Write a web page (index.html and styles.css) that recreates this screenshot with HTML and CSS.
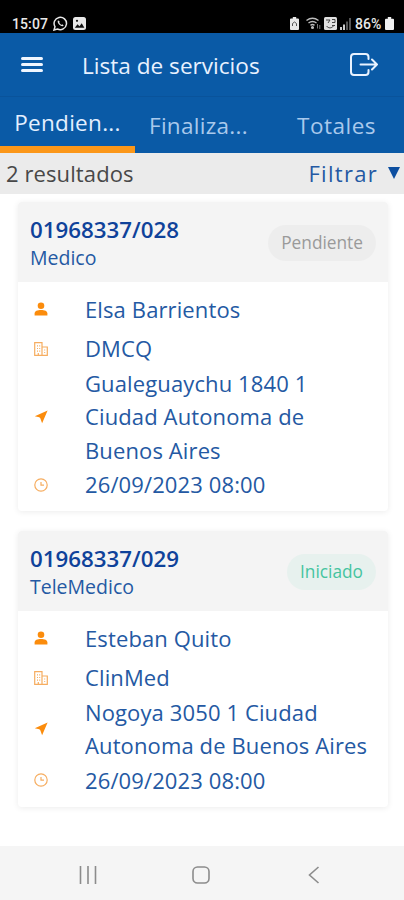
FILE: index.html
```html
<!DOCTYPE html>
<html lang="es">
<head>
    <meta charset="UTF-8">
    <meta name="viewport" content="width=device-width, initial-scale=1.0">
    <title>Lista de servicios</title>
    <link rel="stylesheet" href="styles.css">
</head>
<body>
    <!-- shared icons -->
    <svg class="sprite">
        <symbol id="person" viewBox="0 0 14 14">
            <circle cx="7" cy="3.700" r="3.300"/>
            <path d="M.6 13.400V11.600C.6 9 3.400 8 7 8s6.400 1 6.400 3.600v1.800z"/>
        </symbol>
        <symbol id="building" viewBox="0 0 14 14">
            <path d="M.7 13.300V.7H8v12.600zM8 5h5.300v8.300H8M3 3.800h1M5.200 3.800h1M3 6.500h1M5.200 6.500h1M3 9.200h1M5.200 9.200h1M4.300 13v-2M10.200 8h1M10.200 10.500h1"/>
        </symbol>
        <symbol id="arrow" viewBox="0 0 14 14">
            <path d="M13.600.6L8.100 13.200 6.300 8.200 5.300 7.200.8 6.300z"/>
        </symbol>
        <symbol id="clock" viewBox="0 0 14 14">
            <circle cx="7" cy="7" r="6.200"/>
            <path d="M7 4v3.200h3"/>
        </symbol>
    </svg>

    <div class="status-bar">
        <span class="time">15:07</span>
        <svg width="15" height="15" viewBox="0 0 15 15" fill="none" stroke="#e8e8e8" stroke-width="1.500">
            <path d="M1 14l1-3.300A6.200 6.200 0 1 1 4.500 13z"/>
            <path d="M5 4.300c-.9 1.500 0 3.200 1.400 4.500s3.300 2 4.300.8L9.200 8.300l-1 .6L6.200 6.700l.6-.9z" fill="#e8e8e8" stroke="none"/>
        </svg>
        <svg class="picture" width="13" height="13" viewBox="0 0 13 13">
            <rect width="13" height="13" rx="2.500" fill="#e8e8e8"/>
            <path d="M1.800 10.800l2.700-3.600 2 2 2.200-3 2.700 4.600z" fill="#111"/>
            <circle cx="4" cy="3.800" r="1.100" fill="#111"/>
        </svg>
        <div class="status-right">
            <svg width="9" height="13" viewBox="0 0 9 13">
                <path d="M2.800 0h3.400v1.500H8q1 0 1 1V12q0 1-1 1H1q-1 0-1-1V2.500q0-1 1-1h1.800z" fill="#e8e8e8"/>
                <path d="M2.500 9V6.500L4.500 5l2 1.500V9" fill="none" stroke="#555"/>
            </svg>
            <svg class="wifi" width="15" height="13" viewBox="0 0 15 13" fill="none" stroke="#bbb" stroke-width="1.500">
                <path d="M.5 3.500q6-4.500 12 0M2.500 6q4-3 8 0M4.500 8.300q2-1.500 4 0"/>
                <circle cx="6.500" cy="10.500" r=".8"/>
                <path d="M11.500 7v4.500M13.800 12V8" stroke="#777" stroke-width="1"/>
            </svg>
            <svg class="volte" width="13" height="13" viewBox="0 0 13 13">
                <rect width="13" height="13" rx="1.500" fill="#e0e0e0"/>
                <path d="M2 3h4l-2 3M8 2.500h3v3H8M2.500 9c2 2.500 5 2.500 7 0M8 8.500h3" fill="none" stroke="#444"/>
            </svg>
            <svg class="signal" width="11" height="12" viewBox="0 0 11 12">
                <path d="M0 9h2v3H0zM3 6.500h2V12H3z" fill="#ccc"/>
                <path d="M6 3.500h2V12H6zM9 0h2v12H9z" fill="#555"/>
            </svg>
            <span class="percent">86%</span>
            <svg width="9" height="13" viewBox="0 0 9 13">
                <path d="M2.800 0h3.400v1.800H8q1 0 1 1V12q0 1-1 1H1q-1 0-1-1V2.800q0-1 1-1h1.800z" fill="#f0f0f0"/>
            </svg>
        </div>
    </div>

    <header class="header">
        <div class="menu">
            <span></span>
            <span></span>
            <span></span>
        </div>
        <h1>Lista de servicios</h1>
        <svg class="logout" width="28" height="23" viewBox="0 0 28 23" fill="none" stroke="#e8f2ff" stroke-width="2" stroke-linecap="round" stroke-linejoin="round">
            <path d="M18.500 6V4q0-3-3-3H4Q1 1 1 4v15q0 3 3 3h11.500q3 0 3-3v-2M10.500 11.500H27M22 6.500l5 5-5 5"/>
        </svg>
    </header>

    <nav class="tabs">
        <div class="tab active">Pendien...</div>
        <div class="tab">Finaliza...</div>
        <div class="tab">Totales</div>
    </nav>

    <div class="filter-bar">
        <span class="results">2 resultados</span>
        <span class="filter">Filtrar</span>
        <span class="caret"></span>
    </div>

    <main class="list">
        <div class="card">
            <div class="card-header">
                <div>
                    <h2>01968337/028</h2>
                    <p>Medico</p>
                </div>
                <span class="badge">Pendiente</span>
            </div>
            <div class="card-body">
                <div class="row name"><svg class="icon"><use href="#person"/></svg><span>Elsa Barrientos</span></div>
                <div class="row"><svg class="icon line"><use href="#building"/></svg><span>DMCQ</span></div>
                <div class="row address"><svg class="icon"><use href="#arrow"/></svg><span>Gualeguaychu 1840 1 Ciudad Autonoma de Buenos Aires</span></div>
                <div class="row date"><svg class="icon line"><use href="#clock"/></svg><span>26/09/2023 08:00</span></div>
            </div>
        </div>

        <div class="card">
            <div class="card-header">
                <div>
                    <h2>01968337/029</h2>
                    <p>TeleMedico</p>
                </div>
                <span class="badge started">Iniciado</span>
            </div>
            <div class="card-body">
                <div class="row name"><svg class="icon"><use href="#person"/></svg><span>Esteban Quito</span></div>
                <div class="row"><svg class="icon line"><use href="#building"/></svg><span>ClinMed</span></div>
                <div class="row address"><svg class="icon"><use href="#arrow"/></svg><span>Nogoya 3050 1 Ciudad Autonoma de Buenos Aires</span></div>
                <div class="row date"><svg class="icon line"><use href="#clock"/></svg><span>26/09/2023 08:00</span></div>
            </div>
        </div>
    </main>

    <footer class="nav-bar">
        <svg width="18" height="18" viewBox="0 0 18 18"><path d="M1.500 0v18M9 0v18M16.500 0v18"/></svg>
        <svg width="18" height="18" viewBox="0 0 18 18"><rect x="1" y="1" width="16" height="16" rx="4.500"/></svg>
        <svg width="18" height="18" viewBox="0 0 18 18"><path d="M13.500 1L4.500 9l9 8"/></svg>
    </footer>
</body>
</html>
```

FILE: styles.css
```css
* {
    box-sizing: border-box;
}
body {
    margin: 0;
    height: 900px;
    display: flex;
    flex-direction: column;
    overflow: hidden;
    background: #fff;
    color: #2459a3;
    font-family: 'Open Sans', 'Noto Sans', sans-serif;
}
h1, h2, p {
    margin: 0;
}
.sprite {
    display: none;
}

/* phone status bar */
.status-bar {
    flex: none;
    height: 33px;
    padding: 14px 10px 0 12px;
    display: flex;
    align-items: center;
    background: #000;
    color: #e8e8e8;
    font-family: Roboto, sans-serif;
    font-size: 14px;
    font-weight: 500;
}
.time {
    width: 41px;
    letter-spacing: 0.1px;
}
.picture {
    margin-left: 5px;
}
.status-right {
    margin-left: auto;
    display: flex;
    align-items: center;
}
.wifi {
    margin-left: 7px;
}
.volte {
    margin-left: 3px;
}
.signal {
    margin-left: 3px;
}
.percent {
    width: 30px;
    margin-left: 4px;
    font-size: 14px;
}

.header {
    flex: none;
    height: 64px;
    padding: 0 26px 0 21px;
    display: flex;
    align-items: center;
    background: #0a5aa6;
    border-bottom: 1px solid #09539b;
}
.menu {
    width: 22px;
    display: flex;
    flex-direction: column;
    gap: 3px;
}
.menu span {
    height: 3px;
    border-radius: 2px;
    background: #f0f6ff;
}
.header h1 {
    margin-left: 39px;
    padding-top: 1px;
    color: #e8f1ff;
    font-size: 22.600px;
    font-weight: 500;
}
.logout {
    margin-left: auto;
}

.tabs {
    flex: none;
    height: 56px;
    display: flex;
    background: #0a5aa6;
}
.tab {
    flex: none;
    width: 127px;
    padding-top: 1px;
    color: #a9c9ec;
    font-size: 22.500px;
    line-height: 56px;
    text-align: center;
    letter-spacing: 0.3px;
}
.tab.active {
    width: 135px;
    padding-top: 0;
    color: #e3efff;
    line-height: 52px;
    border-bottom: 7px solid #fb9719;
}
.tab:last-child {
    width: 149px;
    letter-spacing: 0.5px;
}

.filter-bar {
    flex: none;
    height: 41px;
    padding: 0 4px 1px 6px;
    display: flex;
    align-items: center;
    background: #ebebeb;
    font-size: 22px;
}
.results {
    color: #484848;
    letter-spacing: 0.1px;
}
.filter {
    margin-left: auto;
    letter-spacing: 1.300px;
}
.caret {
    margin-left: 10px;
    border: 6.500px solid transparent;
    border-top: 12px solid #0d4fa0;
    border-bottom: 0;
}

.list {
    flex: 1;
    padding: 8px 16px 0 18px;
}
.card {
    margin-bottom: 20px;
    padding-bottom: 9.500px;
    border-radius: 4px;
    box-shadow: 0 1px 6px rgba(0, 0, 0, 0.08);
}
.card-header {
    height: 79.500px;
    padding: 3px 12px 0 12px;
    display: flex;
    align-items: center;
    justify-content: space-between;
    background: #f4f4f4;
    border-radius: 4px 4px 0 0;
}
.card-header h2 {
    color: #0f429a;
    font-size: 22.300px;
    font-weight: 550;
    line-height: 29px;
}
.card-header p {
    font-size: 19.500px;
    line-height: 28px;
}
.badge {
    padding: 0 13px;
    border-radius: 18px;
    background: #ededed;
    color: #9a9a9a;
    font-size: 17.300px;
    line-height: 36px;
}
.badge.started {
    background: #e7f1ee;
    color: #45c4a0;
}
.card-body {
    padding-top: 11px;
}
.row {
    display: flex;
    align-items: center;
    font-size: 22px;
    line-height: 33.500px;
    letter-spacing: 0.12px;
}
.row.name {
    margin-bottom: 6px;
}
.row.address {
    margin: 1px 0;
}
.row span {
    width: 285px;
}
.icon {
    width: 14px;
    height: 14px;
    flex: none;
    margin: 0 37px 0 16px;
    fill: #fb8c0c;
}
.icon.line {
    fill: none;
    stroke: #f6ad60;
    stroke-width: 1.200;
}

.nav-bar {
    flex: none;
    height: 54px;
    padding: 3px 81px 0 79px;
    display: flex;
    align-items: center;
    justify-content: space-between;
    background: #f5f5f5;
}
.nav-bar svg {
    fill: none;
    stroke: #8c8c8c;
    stroke-width: 1.600;
}
```
